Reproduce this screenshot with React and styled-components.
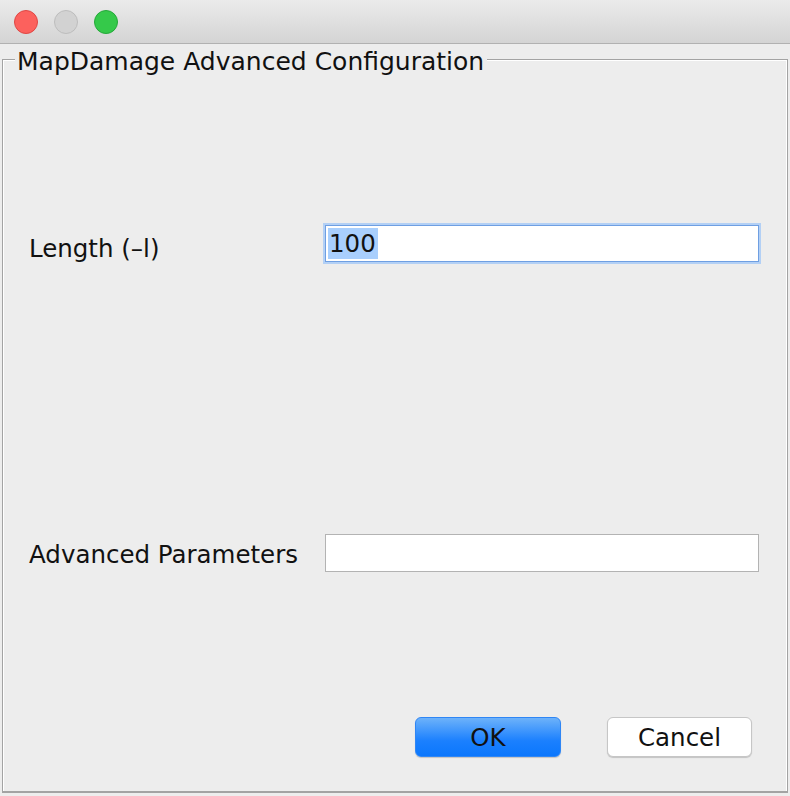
import React from "react";
import styled, { createGlobalStyle } from "styled-components";

const Global = createGlobalStyle`
  html, body { margin: 0; padding: 0; background: #ededed; }
  body { font-family: "DejaVu Sans", "Liberation Sans", sans-serif; }
  * { box-sizing: border-box; }
`;

const Window = styled.div`
  width: 790px;
  height: 796px;
  display: flex;
  flex-direction: column;
  background: #ededed;
  overflow: hidden;
`;

const TitleBar = styled.div`
  height: 44px;
  flex: none;
  display: flex;
  align-items: flex-start;
  gap: 16px;
  padding: 10px 0 0 14px;
  background: linear-gradient(#ebebeb, #d4d4d4);
  border-bottom: 1px solid #b1b1b1;
`;

const Light = styled.span`
  width: 24px;
  height: 24px;
  border-radius: 50%;
  background: ${(p) => p.$bg};
  border: 1px solid ${(p) => p.$edge};
`;

const Content = styled.div`
  flex: 1;
  display: flex;
  flex-direction: column;
  padding: 1px 2px 3px 2px;
`;

const Frame = styled.fieldset`
  flex: 1;
  margin: 0;
  padding: 0 28px 0 26px;
  min-width: 0;
  display: flex;
  flex-direction: column;
  border: 1px solid #a3a3a3;
  border-bottom-width: 2px;
  box-shadow: inset 1px 1px 0 #fff, inset -1px 0 0 #fff;
`;

const Legend = styled.legend`
  margin-left: -14px;
  padding: 6px 3px 0 2px;
  font-size: 25px;
  line-height: 22px;
  color: #111;
  background: #ededed;
`;

const Row = styled.div`
  display: grid;
  grid-template-columns: 296px 1fr;
  align-items: center;
  margin-top: ${(p) => p.$top}px;
`;

const Label = styled.label`
  font-size: 24.5px;
  line-height: 28px;
  color: #111;
  padding-top: ${(p) => p.$shift || 0}px;
`;

const Field = styled.div`
  height: ${(p) => p.$h || 37}px;
  background: #fff;
  border: 1px solid ${(p) => (p.$focused ? "#6f9fe2" : "#b3b3b3")};
  box-shadow: ${(p) => (p.$focused ? "0 0 0 2px #b3d0f5" : "none")};
  display: flex;
  align-items: center;
  padding: 0 2px;
  font-size: 24.5px;
  color: #111;
`;

const Selected = styled.span`
  background: #a9cffd;
  line-height: 31px;
  padding: 0 2px 0 1px;
`;

const ButtonBar = styled.div`
  margin-top: auto;
  margin-bottom: 34px;
  margin-right: 7px;
  display: flex;
  justify-content: flex-end;
  gap: 46px;
`;

const Button = styled.button`
  width: ${(p) => p.$w}px;
  height: 40px;
  font-family: "DejaVu Sans", "Liberation Sans", sans-serif;
  font-size: 24.5px;
  color: #111;
  border-radius: 6px;
  padding: 0;
  border: 1px solid ${(p) => (p.$primary ? "#2f86f5" : "#c6c6c6")};
  background: ${(p) =>
    p.$primary ? "linear-gradient(#6db2fa, #1b80fe 60%, #0b77fd)" : "#fff"};
  box-shadow: 0 1px 1px rgba(0, 0, 0, 0.18);
`;

export default function App() {
  return (
    <Window>
      <Global />
      <TitleBar>
        <Light $bg="#fc615d" $edge="#df4744" />
        <Light $bg="#d2d2d2" $edge="#bdbdbd" />
        <Light $bg="#35c94a" $edge="#25a83a" />
      </TitleBar>
      <Content>
        <Frame>
          <Legend>MapDamage Advanced Configuration</Legend>
          <Row $top={151}>
            <Label $shift={11}>Length (–l)</Label>
            <Field $focused>
              <Selected>100</Selected>
            </Field>
          </Row>
          <Row $top={271}>
            <Label $shift={3}>Advanced Parameters</Label>
            <Field $h={38} />
          </Row>
          <ButtonBar>
            <Button $primary $w={146}>OK</Button>
            <Button $w={145}>Cancel</Button>
          </ButtonBar>
        </Frame>
      </Content>
    </Window>
  );
}
